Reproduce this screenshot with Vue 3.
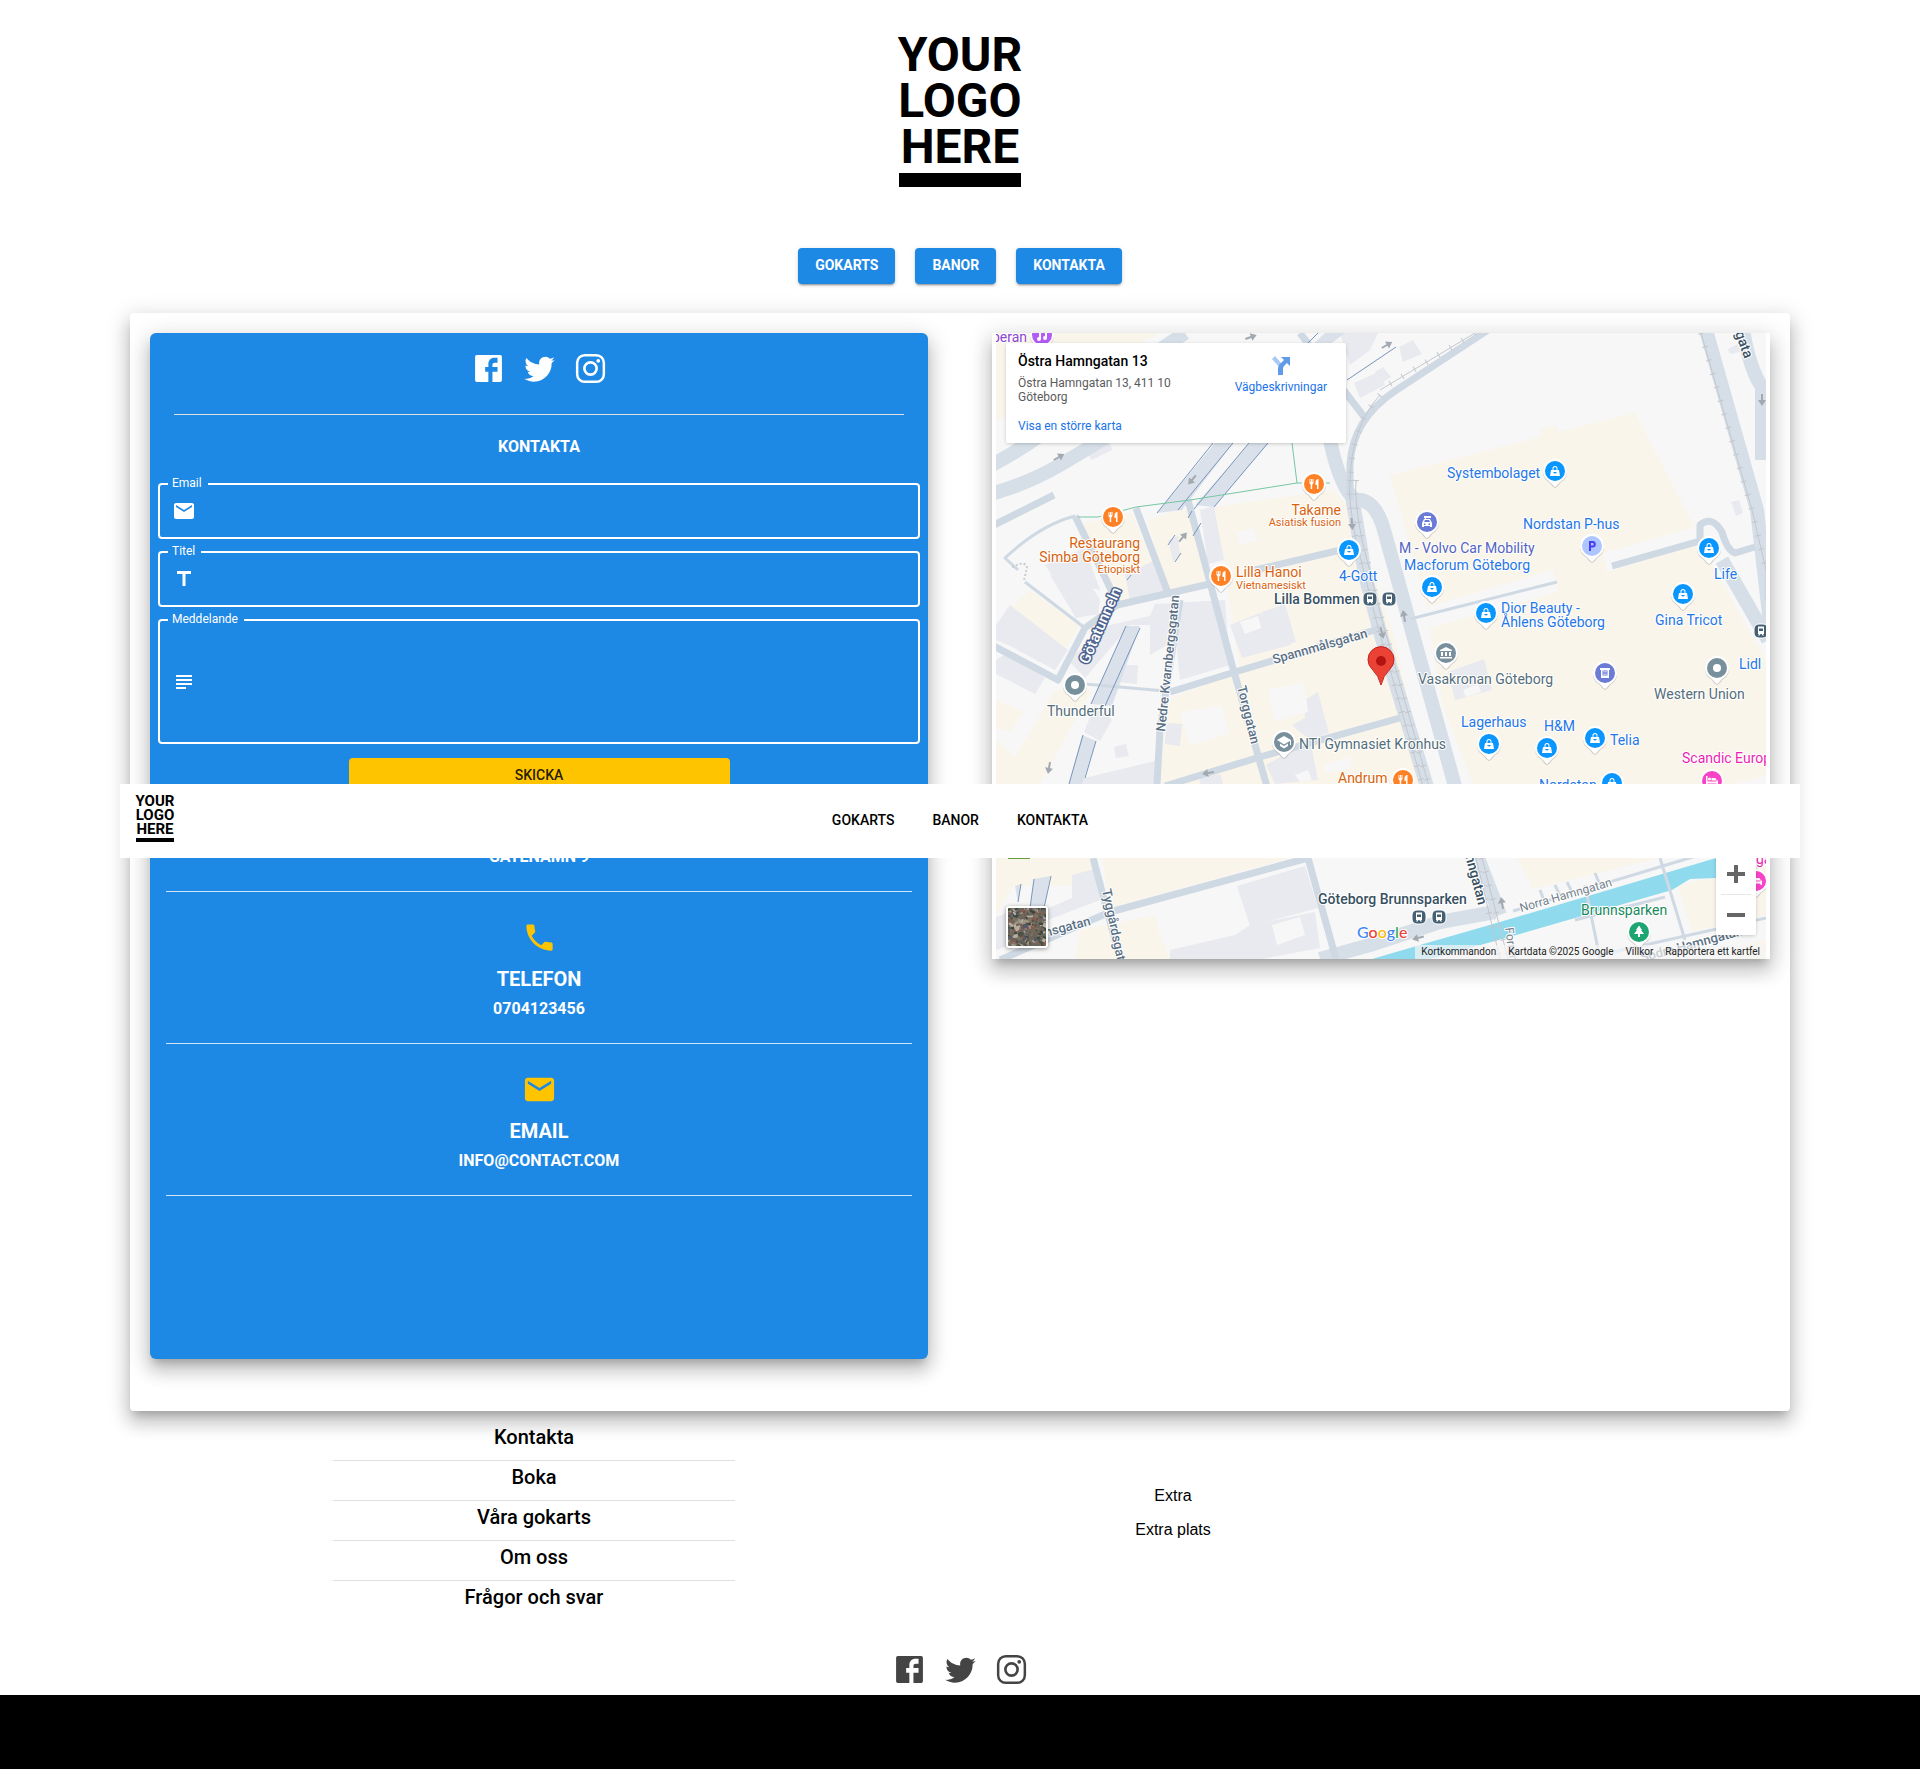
<script setup>
const navLinks = ['Gokarts', 'Banor', 'Kontakta']
const footerLinks = ['Kontakta', 'Boka', 'Våra gokarts', 'Om oss', 'Frågor och svar']

const icons = {
  facebook: 'M4 2.8h16q1.200 0 1.200 1.200v16q0 1.200-1.200 1.200H4q-1.200 0-1.200-1.200V4q0-1.200 1.200-1.200zM11.900 21.200V14.200H9.700V11h2.200V9.200c0-2.900 1.600-4.500 4.200-4.500h2.100V8h-1.700c-1.200 0-1.800.5-1.800 1.600V11h3.500v3.200h-3.500v7z',
  twitter: 'M22.460 6c-.77.35-1.600.58-2.460.69.88-.53 1.560-1.370 1.880-2.380-.83.5-1.750.85-2.720 1.050C18.370 4.500 17.260 4 16 4c-2.350 0-4.270 1.920-4.270 4.290 0 .34.04.67.11.98C8.280 9.090 5.110 7.380 3 4.790c-.37.63-.58 1.370-.58 2.150 0 1.490.75 2.810 1.910 3.560-.71 0-1.370-.2-1.950-.5v.03c0 2.080 1.480 3.820 3.440 4.210a4.220 4.220 0 0 1-1.930.07 4.280 4.280 0 0 0 4 2.980 8.521 8.521 0 0 1-5.330 1.840c-.34 0-.68-.02-1.020-.06C3.440 20.290 5.700 21 8.120 21 16 21 20.330 14.460 20.330 8.790c0-.19 0-.37-.01-.56.84-.6 1.560-1.360 2.140-2.230z',
  instagram: 'M8 2h8a6 6 0 0 1 6 6v8a6 6 0 0 1-6 6H8a6 6 0 0 1-6-6V8a6 6 0 0 1 6-6zM8 3.700A4.300 4.300 0 0 0 3.700 8v8A4.300 4.300 0 0 0 8 20.300h8a4.300 4.300 0 0 0 4.300-4.300V8A4.300 4.300 0 0 0 16 3.700zM12 6.900a5.100 5.100 0 1 1 0 10.200 5.100 5.100 0 0 1 0-10.200zM12 8.700a3.300 3.300 0 1 0 0 6.600 3.300 3.300 0 0 0 0-6.600zM17.300 5.400a1.300 1.300 0 1 1 0 2.600 1.300 1.300 0 0 1 0-2.600z',
  mail: 'M20 4H4c-1.100 0-1.990.9-1.990 2L2 18c0 1.100.9 2 2 2h16c1.100 0 2-.9 2-2V6c0-1.100-.9-2-2-2zm0 4-8 5-8-5V6l8 5 8-5v2z',
  title: 'M5 4v3h5.500v12h3V7H19V4z',
  subject: 'M14 17H4v2h10v-2zm6-8H4v2h16V9zM4 15h16v-2H4v2zM4 5v2h16V5H4z',
  phone: 'M20 15.500c-1.250 0-2.450-.2-3.570-.57-.35-.12-.75-.03-1.020.24l-2.200 2.200c-2.830-1.440-5.150-3.750-6.590-6.590l2.200-2.200c.27-.27.36-.66.24-1.020C8.700 6.450 8.500 5.250 8.500 4c0-.55-.45-1-1-1H4c-.55 0-1 .45-1 1 0 9.390 7.610 17 17 17 .55 0 1-.45 1-1v-3.500c0-.55-.45-1-1-1z'
}
const social = ['facebook', 'twitter', 'instagram']

const contacts = [
  { icon: 'phone', title: 'TELEFON', value: '0704123456' },
  { icon: 'mail', title: 'EMAIL', value: 'INFO@CONTACT.COM' }
]

/* Map layers, in map units */
const beige = [
  '996,333 1160,333 996,421',
  '1083,523 1132,513 1167,597 1117,603',
  '1147,520 1190,507 1210,583 1168,590',
  '1215,507 1333,490 1352,510 1395,640 1410,710 1420,784 1160,784 1167,700 1240,670',
  '1008,610 1030,590 1080,625 1056,665 1008,640',
  '996,700 1024,712 1010,732 996,728',
  '1055,690 1092,690 1040,784 996,784 996,740 1015,757',
  '996,858 1094,858 1100,885 1014,886 996,915',
  '1102,858 1290,858 1110,908',
  '1080,930 1155,915 1160,935 1170,959 1075,959',
  '1390,475 1540,437 1542,428 1557,426 1558,432 1635,413 1695,527 1603,553 1607,572 1700,543 1766,660 1766,776 1735,784 1473,784 1443,707 1430,628 1558,592 1553,570 1427,607',
  '1517,858 1660,858 1533,889',
  '1678,886 1716,877 1766,865 1766,915 1692,932',
  '1745,945 1766,940 1766,959 1745,959'
]
const buildings = [
  '1088,455 1110,443 1112,450 1092,460',
  '1045,565 1085,548 1100,590 1055,580',
  '1050,575 1078,565 1100,600 1098,614 1076,618',
  '1125,575 1155,560 1165,592 1130,600',
  '1200,510 1214,506 1224,560 1208,564',
  '1168,540 1178,536 1180,555 1173,562',
  '996,625 1010,605 1068,650 1055,670 1010,646 996,640',
  '996,660 1010,651 1045,678 1035,694 996,674',
  '1068,660 1110,625 1150,616 1155,604 1225,600 1230,665 1180,680 1176,640 1150,655 1150,625 1130,625 1085,678',
  '1110,665 1138,665 1137,684 1108,681',
  '1095,705 1112,720 1100,741 1084,732',
  '1114,747 1126,744 1129,756 1116,758',
  '1166,723 1182,724 1180,746 1165,744',
  '1076,780 1155,761 1160,784 1076,784',
  '1230,625 1260,613 1295,640 1290,645 1242,658',
  '1262,612 1285,604 1296,642 1272,648',
  '1305,700 1318,692 1329,733 1310,740 1292,725 1305,718',
  '1266,765 1310,740 1318,780 1275,784',
  '1200,778 1220,774 1223,784 1200,784',
  '1399,347 1413,340 1422,354 1403,362',
  '1375,372 1383,367 1391,377 1378,385',
  '1354,383 1378,372 1385,385 1360,398',
  '1340,333 1378,333 1370,350 1350,365',
  '1728,349 1738,344 1740,352 1730,354',
  '1731,502 1739,500 1743,513 1736,516',
  '1448,672 1484,659 1492,690 1455,700',
  '1072,875 1094,869 1100,900 1048,920 1044,910 1072,898',
  '1237,886 1305,866 1318,908 1250,926',
  '1250,925 1315,912 1320,948 1262,959 1170,959 1170,950 1235,935',
  '996,917 1010,912 1010,945 996,950'
]
const yards = [
  '1237,532 1254,528 1257,541 1240,545',
  '1268,690 1304,682 1308,712 1285,718 1275,722',
  '1180,712 1222,706 1229,733 1190,746',
  '1272,925 1300,917 1305,935 1277,945',
  '1463,690 1478,684 1481,692 1466,697',
  '1324,765 1350,757 1352,768 1326,773',
  '1240,622 1258,616 1261,628 1245,634',
  '1295,775 1308,770 1312,780 1300,782'
]
const wideRoads = [
  'M990 466Q1040 440 1085 400L1185 333',
  'M990 494Q1025 485 1060 465L1110 435',
  'M1330 440Q1338 480 1352 497Q1358 530 1365 575L1380 632L1428 790',
  'M1355 500Q1375 498 1384 530L1456 790',
  'M1706 330L1757 510L1772 640',
  'M1743 330Q1750 370 1762 387V460',
  'M1478 858L1500 915',
  'M1495 912L1440 922L1370 945L1320 959',
  'M1722 560L1768 640'
]
const roads = [
  'M1488 330L1395 391Q1352 420 1350 465V500', 'M1300 333L1365 418',
  'M990 527L1054 495', 'M1075 516L1118 604', 'M1136 508L1168 593L1180 594', 'M1188 500L1232 665L1268 790',
  'M1117 605L1214 583', 'M1255 570L1345 549', 'M1117 605L1085 628L1058 680L990 644', 'M1180 600L1160 730L1157 784',
  'M1170 692L1235 672L1385 627', 'M1165 786L1260 757L1400 718', 'M1093 858L1120 959', 'M1000 960L1110 912L1308 858',
  'M1308 858L1336 959', 'M1612 566L1700 541V525Q1712 515 1722 532Q1727 550 1735 553L1755 547'
]
const thinRoads = [
  'M1075 516Q1040 525 1005 558L1018 570', 'M1025 582L1085 628',
  'M1410 619L1557 582', 'M1085 684L1165 691', 'M1513 911L1716 850', 'M1585 885L1600 959',
  'M1660 858L1685 940', 'M1540 890L1545 903', 'M1555 885L1561 898', 'M1567 882L1573 894', 'M1595 873L1600 885',
  'M1575 920L1665 897', 'M1600 955L1766 918', 'M1766 600L1766 560'
]
const tunnels = [
  '1157,513 1215,443 1233,443 1182,510', '1195,505 1250,443 1268,443 1214,507',
  '1126,626 1140,626 1112,706 1091,704', '1082,735 1096,741 1082,784 1069,784',
  '1034,879 1050,876 1044,908 1030,910', '1015,886 1021,884 1018,902',
  '1305,352 1325,333 1345,333 1312,358'
]
const tunnelLines = [
  'M1157 513L1213 443', 'M1178 510L1233 443', 'M1194 509L1249 443', 'M1214 507L1268 443', 'M1126 626L1091 704',
  'M1140 628L1105 706', 'M1083 735L1069 784', 'M1096 741L1085 778', 'M1034 879L1030 908', 'M1051 876L1044 908',
  'M1021 884L1018 902', 'M1168 545L1175 535', 'M1175 562L1181 553', 'M1188 518L1192 511', 'M1193 536L1201 523',
  'M1127 580L1131 575', 'M1308 343L1318 333', 'M1347 380L1396 347'
]
const rails = [
  'M1350 480Q1348 500 1356 540L1376 620L1424 790', 'M1356 480Q1354 500 1362 540L1382 620L1430 790',
  'M1380 395Q1352 425 1350 480', 'M1475 333L1380 390', 'M1701 333L1752 510L1766 570', 'M1476 858L1500 959', 'M1482 858L1508 959'
]

const labels = [
  ['peran', 1027, 342, 'purple', 'end'],
  ['Restaurang', 1140, 548, 'orange', 'end'], ['Simba Göteborg', 1140, 562, 'orange', 'end'],
  ['Etiopiskt', 1140, 573, 'orange small', 'end'], ['Takame', 1341, 515, 'orange', 'end'],
  ['Asiatisk fusion', 1341, 526, 'orange small', 'end'], ['Lilla Hanoi', 1236, 577, 'orange'],
  ['Vietnamesiskt', 1236, 589, 'orange small'], ['4-Gott', 1339, 581, 'blue'],
  ['Lilla Bommen', 1274, 604, 'dark'], ['Systembolaget', 1447, 478, 'blue'],
  ['Nordstan P-hus', 1523, 529, 'blue'], ['M - Volvo Car Mobility', 1399, 553, 'indigo'],
  ['Macforum Göteborg', 1404, 570, 'blue'], ['Dior Beauty -', 1501, 613, 'blue'],
  ['Åhlens Göteborg', 1501, 627, 'blue'], ['Gina Tricot', 1655, 625, 'blue'], ['Life', 1714, 579, 'blue'],
  ['Thunderful', 1047, 716, 'gray'], ['NTI Gymnasiet Kronhus', 1299, 749, 'gray'],
  ['Andrum', 1338, 783, 'orange'], ['Vasakronan Göteborg', 1418, 684, 'gray'],
  ['Western Union', 1654, 699, 'gray'], ['Lidl', 1739, 669, 'blue'], ['Lagerhaus', 1461, 727, 'blue'],
  ['H&M', 1544, 731, 'blue'], ['Telia', 1610, 745, 'blue'], ['Scandic Europa', 1682, 763, 'pink'],
  ['Nordstan', 1539, 790, 'blue'], ['ga', 1756, 864, 'pink'],
  ['Göteborg Brunnsparken', 1318, 904, 'dark'], ['Brunnsparken', 1581, 915, 'green']
]
const streets = [
  ['Götatunneln', 1088, 665, -66, 'tunnel'], ['Nedre Kvarnbergsgatan', 1165, 732, -84, 'street'],
  ['Torggatan', 1237, 687, 76, 'street'], ['Spannmålsgatan', 1274, 664, -16, 'street'],
  ['Tyggårdsgatan', 1102, 890, 78, 'street'], ['msgatan', 1042, 938, -15, 'street'],
  ['Norra Hamngatan', 1521, 912, -16, 'lane'], ['Södra Hamngatan', 1642, 962, -15, 'street'],
  ['mngatan', 1464, 852, 75, 'dark'], ['Fornminnes', 1505, 928, 82, 'lane'], ['gata', 1735, 333, 70, 'dark']
]

const colours = {
  food: '#ff8126', shop: '#0a96ff', car: '#6b7bd6', dot: '#78909c', school: '#78909c', museum: '#78909c',
  hotel: '#f843c8', music: '#b15cf5', tree: '#1ea672', cinema: '#6b7bd6', parking: '#aec6ff'
}
const glyphs = {
  food: 'M-4.500-5v3.500q0 1.500 1.200 2V5h1.500V.5q1.300-.5 1.300-2V-5h-1v3h-.6v-3h-1v3h-.6v-3zM4.500-5Q1.500-5 1.500-1.500V1h1.500v4h1.500z',
  shop: 'M-4-1h1.500v-1.500a2.500 2.500 0 0 1 5 0V-1H4l1 6H-5zM-1.500-1h3v-1.500a1.500 1.500 0 0 0-3 0zM-2 1q2 3 4 0z',
  car: 'M-3-6H4v2H-1v1h4l2 4v4H3V4h-6v1h-2V1l2-4h1v-1h-1zM-2-2l-1 2h6l-1-2zM-3 1.500v1.500h1.500V1.500zM1.500 1.500v1.500H3V1.500z',
  dot: 'M0-4a4 4 0 1 1 0 8 4 4 0 0 1 0-8z',
  school: 'M0-6l7 4V3H6v-4L0 2.500-7-2zM-4 1.500L0 4l4-2.500V4L0 6.500-4 4z',
  museum: 'M0-6l6 3v1H-6v-1zM-5-1h2v4h-2zM-1-1h2v4h-2zM3-1h2v4h-2zM-6 4H6v1.500H-6z',
  hotel: 'M-6-5h1.500v5.500H4.500V-1q0-2-2-2H-.5V-.5H6V4H4.500V2.500h-9V4H-6zM-2.500-3.500a1.500 1.500 0 1 1 0 3 1.500 1.500 0 0 1 0-3z',
  music: 'M-3-5L5-6V3a2 2 0 1 1-2-2v-4L-1-2.500V4a2 2 0 1 1-2-2z',
  tree: 'M0-6.500L3-2H2L5 2H1v3h-2V2h-4l3-4h-1z',
  cinema: 'M-5-5H5v2H4v8H-4v-8h-1zM-2.500-2.500v5h5v-5zM-1.500-2h1v1h-1zM.5-2h1v1h-1zM-1.500-.5h1v1h-1zM.5-.5h1v1h-1zM-1.500 1h1v1h-1zM.5 1h1v1h-1z',
  parking: 'M-3-5h3.500a3.200 3.200 0 0 1 0 6.500H-1V5h-2zM-1-3V-.5H.5a1.200 1.200 0 0 0 0-2.500z'
}
const pins = [
  ['music', 1042, 335], ['food', 1113, 517], ['food', 1314, 484], ['food', 1221, 576], ['food', 1403, 780],
  ['shop', 1349, 550], ['shop', 1555, 471], ['shop', 1432, 587], ['shop', 1486, 613], ['shop', 1709, 548],
  ['shop', 1683, 594], ['shop', 1489, 744], ['shop', 1547, 748], ['shop', 1595, 738], ['shop', 1612, 783],
  ['car', 1427, 522], ['cinema', 1605, 673], ['dot', 1075, 685], ['dot', 1717, 668], ['school', 1284, 742],
  ['museum', 1446, 653], ['hotel', 1712, 781], ['hotel', 1756, 881], ['tree', 1639, 932], ['parking', 1592, 546]
]
const stops = [[1370, 599], [1389, 599], [1761, 631], [1419, 917], [1439, 917]]
const arrows = [[1059, 457, 60], [1251, 337, 70], [1192, 480, 220], [1183, 537, 40], [1352, 524, 175], [1049, 768, 190], [1208, 773, 260], [1404, 616, -10], [1762, 400, 180], [1502, 903, -10], [1418, 938, 255], [1387, 345, 60], [1382, 633, 165]]

/* Speckled aerial tile for the satellite switch */
const tileTones = ['#6d6a5f', '#7d7264', '#4a5246', '#8a5a4e', '#a09684', '#3d463d', '#6f6459', '#b8b0a2', '#55586a']
let seed = 11
const random = () => {
  seed = (seed * 16807) % 2147483647
  return seed / 2147483647
}
const tiles = Array.from({ length: 380 }, () => ({
  x: random() * 38 - 2,
  y: random() * 38 - 2,
  w: 1 + random() * 5,
  h: 1 + random() * 3,
  r: random() * 90 - 45,
  fill: tileTones[Math.floor(random() * tileTones.length)]
}))
</script>

<template>
  <div class="page">
    <header class="header">
      <a href="#" class="logo"><span>YOUR</span><span>LOGO</span><span>HERE</span></a>
      <nav class="menu">
        <button v-for="n in navLinks" :key="n" type="button">{{ n }}</button>
      </nav>
    </header>

    <nav class="navbar">
      <a href="#" class="logo small"><span>YOUR</span><span>LOGO</span><span>HERE</span></a>
      <div class="navbar-links">
        <a v-for="n in navLinks" :key="n" href="#">{{ n }}</a>
      </div>
    </nav>

    <main class="paper">
      <section class="contact">
        <div class="social">
          <a v-for="s in social" :key="s" href="#" :aria-label="s">
            <svg viewBox="0 0 24 24"><path fill-rule="evenodd" :d="icons[s]" /></svg>
          </a>
        </div>
        <hr class="rule inset">
        <h2>KONTAKTA</h2>
        <form @submit.prevent>
          <fieldset>
            <legend><label for="email">Email</label></legend>
            <div class="control">
              <svg viewBox="0 0 24 24"><path :d="icons.mail" /></svg>
              <input id="email" type="email">
            </div>
          </fieldset>
          <fieldset>
            <legend><label for="subject">Titel</label></legend>
            <div class="control">
              <svg viewBox="0 0 24 24"><path :d="icons.title" /></svg>
              <input id="subject" type="text">
            </div>
          </fieldset>
          <fieldset>
            <legend><label for="message">Meddelande</label></legend>
            <div class="control tall">
              <svg viewBox="0 0 24 24"><path :d="icons.subject" /></svg>
              <textarea id="message"></textarea>
            </div>
          </fieldset>
          <button type="submit" class="send">SKICKA</button>
        </form>
        <p class="street-name">GATENAMN 9</p>
        <hr class="rule">
        <template v-for="c in contacts" :key="c.title">
          <div class="entry">
            <svg viewBox="0 0 24 24"><path :d="icons[c.icon]" /></svg>
            <h3>{{ c.title }}</h3>
            <p>{{ c.value }}</p>
          </div>
          <hr class="rule">
        </template>
      </section>

      <section class="map">
        <svg class="canvas" viewBox="996 333 770 626" preserveAspectRatio="xMidYMid slice">
          <rect x="996" y="333" width="770" height="626" fill="#f7f7f7" />
          <polygon v-for="p in beige" :key="p" :points="p" fill="#faf5ea" />
          <polygon v-for="p in buildings" :key="p" :points="p" fill="#e8eaef" />
          <polygon v-for="p in yards" :key="p" :points="p" fill="#f7f7f7" />
          <polygon points="1372,959 1420,945 1500,922 1716,858 1716,878 1690,879 1672,890 1520,934 1430,959" fill="#90daee" />
          <polygon v-for="p in tunnels" :key="p" :points="p" fill="#dae1ea" />
          <g fill="none" stroke-linejoin="round">
            <path v-for="d in wideRoads" :key="d" :d="d" stroke="#d6dfe7" stroke-width="14" />
            <path v-for="d in roads" :key="d" :d="d" stroke="#cfd9e3" stroke-width="7" />
            <path v-for="d in thinRoads" :key="d" :d="d" stroke="#cfd9e3" stroke-width="3" />
            <path v-for="d in tunnelLines" :key="d" :d="d" stroke="#7795bb" />
            <g v-for="d in rails" :key="d">
              <path :d="d" stroke="#c3c7cc" />
              <path :d="d" stroke="#c3c7cc" stroke-width="6" stroke-dasharray="1 13" />
            </g>
            <path d="M1292 443L1297 483M1078 517L1098 517L1136 507L1190 500L1297 483H1330" stroke="#76c7a4" />
            <path d="M1012 567Q1026 560 1027 568L1024 580" stroke="#c8ccd2" stroke-width="2" stroke-dasharray="2 2" />
          </g>
          <path v-for="(a, i) in arrows" :key="i" d="M0-6L4 0H1V6H-1V0H-4z" fill="#a3a9b0" :transform="`translate(${a[0]} ${a[1]}) rotate(${a[2]})`" />
          <text v-for="s in streets" :key="s[0]" :class="s[4]" :transform="`translate(${s[1]} ${s[2]}) rotate(${s[3]})`">{{ s[0] }}</text>
          <g v-for="(p, i) in pins" :key="i" :transform="`translate(${p[1]} ${p[2]})`">
            <path d="M0 17Q-3 16-5 12L-9 9A12 12 0 1 1 9 9L5 12Q3 16 0 17z" fill="#9a9a9a" opacity=".5" />
            <path d="M0 16Q-2 15-4 12L-9 8A12 12 0 1 1 9 8L4 12Q2 15 0 16z" fill="#fff" />
            <circle r="10" :fill="colours[p[0]]" />
            <path :d="glyphs[p[0]]" :fill="p[0] === 'parking' ? '#4a3df5' : '#fff'" fill-rule="evenodd" />
          </g>
          <g v-for="(s, i) in stops" :key="i" :transform="`translate(${s[0]} ${s[1]})`">
            <rect x="-7" y="-7" width="14" height="14" rx="5" fill="#455f73" stroke="#fff" />
            <path d="M-3-4.500H3V3H2l1 1.500H1.500L.5 3h-1l-1 1.500H-3L-2 3H-3zM-2-2.500V0H2v-2.500z" fill="#fff" fill-rule="evenodd" />
          </g>
          <text v-for="l in labels" :key="l[0]" :x="l[1]" :y="l[2]" :class="l[3]" :text-anchor="l[4]">{{ l[0] }}</text>
          <path d="M1381 685Q1379 676 1372 669A13 13 0 1 1 1390 669Q1383 676 1381 685z" fill="#ea4335" stroke="#c5221f" />
          <circle cx="1381" cy="661" r="5" fill="#b31412" />
          <text class="brand" x="1357" y="938"><tspan fill="#4285f4">G</tspan><tspan fill="#ea4335">o</tspan><tspan fill="#fbbc04">o</tspan><tspan fill="#4285f4">g</tspan><tspan fill="#34a853">l</tspan><tspan fill="#ea4335">e</tspan></text>
          <path d="M1008 858.500h22" stroke="#689f38" />
        </svg>

        <div class="place">
          <div>
            <strong>Östra Hamngatan 13</strong>
            <p>Östra Hamngatan 13, 411 10 Göteborg</p>
            <a href="#">Visa en större karta</a>
          </div>
          <a href="#" class="directions">
            <svg viewBox="0 0 22 22">
              <path d="M2 4L5 1L11 8V14z" fill="#a9c8f5" />
              <path d="M8 20V13Q8 10 11 8L14 5L11 2H20V11L17 8L14 11Q13 12 13 14V20z" fill="#5f9be8" />
            </svg>
            Vägbeskrivningar
          </a>
        </div>
        <button type="button" class="satellite" aria-label="Satellit">
          <svg viewBox="0 0 38 38">
            <rect width="38" height="38" fill="#6a665b" />
            <rect v-for="(t, i) in tiles" :key="i" :width="t.w" :height="t.h" :fill="t.fill" :transform="`translate(${t.x} ${t.y}) rotate(${t.r})`" />
          </svg>
        </button>
        <div class="zoom">
          <button type="button" aria-label="Zooma in"><svg viewBox="0 0 18 18"><path d="M7 0h4v7h7v4h-7v7H7v-7H0V7h7z" /></svg></button>
          <button type="button" aria-label="Zooma ut"><svg viewBox="0 0 18 18"><path d="M0 7h18v4H0z" /></svg></button>
        </div>
        <div class="credits">
          <a href="#">Kortkommandon</a><span>Kartdata ©2025 Google</span><a href="#">Villkor</a><a href="#">Rapportera ett kartfel</a>
        </div>
      </section>
    </main>

    <footer>
      <div class="footer-grid">
        <ul>
          <li v-for="f in footerLinks" :key="f"><a href="#">{{ f }}</a></li>
        </ul>
        <div class="extra">
          <p>Extra</p>
          <p>Extra plats</p>
        </div>
      </div>
      <div class="social dark">
        <a v-for="s in social" :key="s" href="#" :aria-label="s">
          <svg viewBox="0 0 24 24"><path fill-rule="evenodd" :d="icons[s]" /></svg>
        </a>
      </div>
      <div class="bar"></div>
    </footer>
  </div>
</template>

<style>
body {
  margin: 0;
  background: #fff;
}
</style>

<style scoped>
.page {
  position: relative;
  font-family: Roboto, "Liberation Sans", sans-serif;
  color: #000;
}
.page * {
  box-sizing: border-box;
}
a {
  color: inherit;
  text-decoration: none;
}
p, h2, h3, ul {
  margin: 0;
  padding: 0;
}
button {
  font-family: inherit;
  border: 0;
  padding: 0;
  cursor: pointer;
}
svg {
  display: block;
  fill: currentColor;
}

.header {
  display: flex;
  flex-direction: column;
  align-items: center;
  padding-top: 32px;
}
.logo {
  display: flex;
  flex-direction: column;
  align-items: center;
  font-size: 48px;
  line-height: 46px;
  font-weight: 700;
}
.logo::after {
  content: "";
  width: 122px;
  height: 14px;
  margin-top: 3px;
  background: #000;
}
.menu {
  display: flex;
  gap: 20px;
  margin: 61px 0 29px;
}
.menu button {
  height: 36px;
  padding: 0 17px 2px;
  border-radius: 4px;
  background: #1e88e5;
  color: #fff;
  font-size: 14px;
  font-weight: 700;
  text-transform: uppercase;
  box-shadow: 0 3px 1px -2px rgba(0, 0, 0, .2), 0 2px 2px rgba(0, 0, 0, .14), 0 1px 5px rgba(0, 0, 0, .12);
}

.navbar {
  position: absolute;
  z-index: 2;
  top: 784px;
  left: 120px;
  right: 120px;
  height: 74px;
  padding: 10px 16px;
  display: flex;
  align-items: flex-start;
  background: #fff;
}
.logo.small {
  width: 38px;
  font-size: 15px;
  line-height: 14px;
}
.logo.small::after {
  width: 38px;
  height: 4px;
  margin-top: 2px;
}
.navbar-links {
  flex: 1;
  display: flex;
  justify-content: center;
  gap: 38px;
  margin-right: 38px;
  line-height: 52px;
  font-size: 14px;
  font-weight: 500;
  text-transform: uppercase;
}

.paper {
  margin: 0 130px;
  padding: 20px 20px 52px;
  display: grid;
  grid-template-columns: 1fr 1fr;
  gap: 64px;
  align-items: start;
  border-radius: 4px;
  background: #fff;
}
.paper, .contact, .map {
  box-shadow: 0 7px 8px -4px rgba(0, 0, 0, .2), 0 12px 17px 2px rgba(0, 0, 0, .14), 0 5px 22px 4px rgba(0, 0, 0, .12);
}

.contact {
  padding: 18px 8px 163px;
  border-radius: 6px;
  background: #1e88e5;
  color: #fff;
  text-align: center;
}
.social {
  display: flex;
  justify-content: center;
  gap: 16px;
}
.social svg {
  width: 35px;
  height: 35px;
}
.rule {
  height: 1px;
  margin: 0 8px;
  border: 0;
  background: #d2e7fa;
}
.rule.inset {
  margin: 28px 16px 0;
  background: #e0e0e0;
}
h2 {
  margin: 20px 0 18px;
  font-size: 16px;
  line-height: 24px;
  font-weight: 700;
}
form {
  display: flex;
  flex-direction: column;
  gap: 6px;
}
fieldset {
  min-width: 0;
  margin: 0;
  padding: 0 0 0 8px;
  border: 2px solid #fff;
  border-radius: 4px;
}
legend {
  padding: 0 6px 2px 4px;
  font-size: 12px;
  line-height: 12px;
  text-align: left;
}
legend label {
  display: block;
}
.control {
  height: 46px;
  padding: 0 4px 6px;
  display: flex;
  align-items: center;
  gap: 8px;
}
.control.tall {
  height: 115px;
}
.control svg {
  width: 24px;
  height: 24px;
}
input, textarea {
  flex: 1;
  height: 100%;
  padding: 0;
  border: 0;
  outline: 0;
  resize: none;
  background: transparent;
  color: #fff;
  font: 16px Roboto, sans-serif;
}
.send {
  align-self: center;
  width: 50%;
  height: 36px;
  margin-top: 8px;
  padding-bottom: 2px;
  border-radius: 4px;
  background: #ffc400;
  color: rgba(0, 0, 0, .87);
  font-size: 14px;
  font-weight: 500;
}
.street-name {
  margin: 53px 0 24px;
  font-size: 16px;
  line-height: 20px;
  font-weight: 700;
}
.entry {
  display: flex;
  flex-direction: column;
  align-items: center;
  padding: 28px 0 24px;
}
.entry svg {
  width: 35px;
  height: 35px;
  color: #ffc400;
}
.entry h3 {
  margin: 12px 0 8px;
  font-size: 20px;
  line-height: 24px;
  font-weight: 700;
}
.entry p {
  font-size: 16px;
  line-height: 20px;
  font-weight: 700;
}

.map {
  position: relative;
  padding: 0 4px;
  background: #fff;
}
.canvas {
  width: 100%;
  height: 626px;
}
.canvas text {
  font-size: 14px;
  paint-order: stroke;
  stroke: #fff;
  stroke-width: 2px;
  stroke-linejoin: round;
}
.canvas .small { font-size: 11px; }
.canvas .orange { fill: #d9630d; }
.canvas .blue { fill: #1f77e8; }
.canvas .indigo { fill: #5363c4; }
.canvas .purple { fill: #8e44d0; }
.canvas .pink { fill: #ec1fb4; }
.canvas .green { fill: #18895c; }
.canvas .gray { fill: #546e7a; }
.canvas .dark { fill: #37505f; font-weight: 500; }
.canvas .street { fill: #5b7084; font-size: 13px; font-weight: 500; }
.canvas .lane { fill: #75818c; font-size: 12px; }
.canvas .tunnel { fill: #fff; stroke: #4d638f; stroke-width: 3px; font-size: 15px; font-weight: 500; }
.canvas .brand { font: 500 16px Lato, sans-serif; }

.place {
  position: absolute;
  top: 10px;
  left: 14px;
  width: 340px;
  height: 100px;
  padding: 8px 19px 0 12px;
  display: flex;
  justify-content: space-between;
  border-radius: 2px;
  background: #fff;
  box-shadow: 0 1px 4px -1px rgba(0, 0, 0, .3);
  font-size: 12px;
  line-height: 14px;
}
.place strong {
  font-size: 14px;
  line-height: 20px;
  font-weight: 500;
}
.place p {
  width: 160px;
  margin: 5px 0 15px;
  color: #5b5b5b;
}
.place a {
  color: #1a73e8;
}
.directions {
  display: flex;
  flex-direction: column;
  align-items: center;
  gap: 3px;
  padding-top: 4px;
}
.directions svg {
  width: 22px;
  height: 22px;
}
.satellite {
  position: absolute;
  left: 14px;
  bottom: 11px;
  width: 42px;
  height: 42px;
  border: 2px solid #fff;
  border-radius: 3px;
  overflow: hidden;
  box-shadow: 0 1px 4px rgba(0, 0, 0, .4);
}
.zoom {
  position: absolute;
  right: 14px;
  bottom: 24px;
  width: 40px;
  padding: 0 5px 1px;
  border-radius: 2px;
  background: #fff;
  color: #666;
  box-shadow: 0 1px 4px -1px rgba(0, 0, 0, .3);
}
.zoom button {
  display: flex;
  align-items: center;
  justify-content: center;
  width: 30px;
  height: 40px;
  background: none;
  color: inherit;
}
.zoom button + button {
  border-top: 1px solid #e6e6e6;
}
.zoom svg {
  width: 18px;
  height: 18px;
}
.credits {
  position: absolute;
  right: 4px;
  bottom: 0;
  display: flex;
  gap: 12px;
  padding: 0 6px;
  background: rgba(245, 245, 245, .7);
  color: #222;
  font-size: 10px;
  line-height: 14px;
}

.footer-grid {
  display: grid;
  grid-template-columns: 333fr 402fr 237fr 402fr 546fr;
  padding-top: 10px;
}
ul {
  grid-column: 2;
  list-style: none;
  text-align: center;
  font-size: 20px;
  line-height: 32px;
  font-weight: 500;
}
li {
  height: 40px;
}
li:not(:last-child) {
  border-bottom: 1px solid #e0e0e0;
}
.extra {
  grid-column: 4;
  padding-top: 66px;
  font: 16px/18px "Liberation Sans", Arial, sans-serif;
  text-align: center;
}
.extra p {
  margin-bottom: 16px;
}
.social.dark {
  padding: 31px 0 8px;
  color: #444;
}
.bar {
  height: 74px;
  background: #000;
}
</style>
